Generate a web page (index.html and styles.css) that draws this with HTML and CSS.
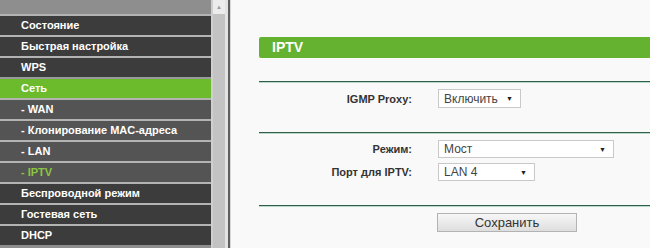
FILE: index.html
```html
<!DOCTYPE html>
<html lang="ru">
<head>
<meta charset="utf-8">
<title>IPTV</title>
<link rel="stylesheet" href="styles.css">
</head>
<body>
<div class="page">
  <nav class="sidebar">
    <div class="item">Состояние</div>
    <div class="item">Быстрая настройка</div>
    <div class="item">WPS</div>
    <div class="item active">Сеть</div>
    <div class="item sub">- WAN</div>
    <div class="item sub">- Клонирование MAC-адреса</div>
    <div class="item sub">- LAN</div>
    <div class="item sub current">- IPTV</div>
    <div class="item">Беспроводной режим</div>
    <div class="item">Гостевая сеть</div>
    <div class="item">DHCP</div>
  </nav>
  <div class="scrollbar">
    <div class="scroll-btn">&#9650;</div>
  </div>
  <div class="divider"></div>
  <main class="main">
    <div class="title">IPTV</div>
    <div class="rule"></div>
    <div class="section">
      <div class="row">
        <span class="label">IGMP Proxy:</span>
        <span class="select w-igmp"><span>Включить</span><span class="arrow">&#9660;</span></span>
      </div>
    </div>
    <div class="rule"></div>
    <div class="section">
      <div class="row">
        <span class="label">Режим:</span>
        <span class="select w-mode"><span>Мост</span><span class="arrow">&#9660;</span></span>
      </div>
      <div class="row">
        <span class="label">Порт для IPTV:</span>
        <span class="select w-port"><span>LAN 4</span><span class="arrow">&#9660;</span></span>
      </div>
    </div>
    <div class="rule"></div>
    <div class="section">
      <div class="row">
        <span class="label"></span>
        <button class="btn" type="button">Сохранить</button>
      </div>
    </div>
  </main>
</div>
</body>
</html>
```

FILE: styles.css
```css
html, body {
  margin: 0;
  padding: 0;
  height: 100%;
  overflow: hidden;
  background: #f9f9f9;
  font-family: "Liberation Sans", Arial, sans-serif;
}

.page {
  display: flex;
  height: 248px;
}

.sidebar {
  width: 211px;
  flex: none;
  background: #8e8e8e;
  padding-top: 14px;
  border-right: 2px solid #cfcfcf;
}

.item {
  height: 19px;
  line-height: 19px;
  border-top: 2px solid #b3b3b3;
  background: #3c3c3c;
  color: #ffffff;
  font-weight: bold;
  font-size: 11px;
  padding-left: 21px;
  white-space: nowrap;
}

.item.sub {
  background: #545454;
}

.item.active {
  background: #6cbb2d;
  border-top-color: #9a9a9a;
}

.item.current {
  color: #8cc63f;
}

.scrollbar {
  width: 12px;
  flex: none;
  background: #c3c3c3;
  border-right: 3px solid #e3e3e3;
}

.scroll-btn {
  height: 14px;
  background: #ececec;
  color: #9a9a9a;
  font-size: 6px;
  line-height: 14px;
  text-align: center;
}

.divider {
  width: 2px;
  flex: none;
  background: #5e5e5e;
  border-right: 1px solid #d8d8d8;
}

.main {
  flex: 1;
  background: #f9f9f9;
  padding: 37px 0 0 28px;
  display: flex;
  flex-direction: column;
}

.title {
  height: 21px;
  line-height: 21px;
  background: #64b22f;
  color: #ffffff;
  font-weight: bold;
  font-size: 14px;
  padding-left: 13px;
  border-radius: 2px 0 0 2px;
}

.rule {
  height: 1px;
  background: #2f5f4c;
  border-bottom: 1px solid #b9d9c6;
  margin-top: 23px;
}

.section {
  display: flex;
  flex-direction: column;
  gap: 5px;
  padding: 6px 0 1px;
}

.row {
  display: flex;
  align-items: center;
  gap: 26px;
}

.label {
  width: 153px;
  flex: none;
  text-align: right;
  font-weight: bold;
  font-size: 11px;
  color: #333333;
}

.select {
  display: flex;
  align-items: center;
  justify-content: space-between;
  box-sizing: border-box;
  height: 19px;
  background: #ffffff;
  border: 1px solid #c9c9c9;
  font-size: 12px;
  color: #444444;
  padding: 0 7px 0 5px;
}

.arrow {
  font-size: 7px;
  color: #222222;
}

.w-igmp { width: 83px; }
.w-mode { width: 176px; height: 18px; }
.w-port { width: 97px; height: 18px; }

.btn {
  width: 140px;
  height: 19px;
  box-sizing: border-box;
  margin-left: -1px;
  border: 1px solid #b3b3b3;
  background: linear-gradient(#f7f7f7, #dedede);
  font-family: "Liberation Sans", Arial, sans-serif;
  font-size: 13px;
  color: #333333;
  padding: 0;
}
```
